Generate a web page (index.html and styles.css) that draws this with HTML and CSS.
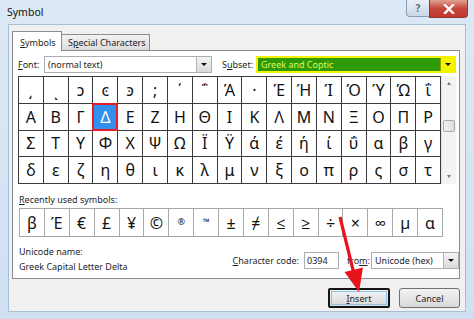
FILE: index.html
```html
<!DOCTYPE html>
<html>
<head>
<meta charset="UTF-8">
<title>Symbol</title>
<link rel="stylesheet" href="styles.css">
</head>
<body>
<div class="window">
    <div class="titlebar">
        <span class="title">Symbol</span>
        <div class="caption">
            <div class="cbtn help">?</div>
            <div class="cbtn close">
                <svg width="12" height="10" viewBox="0 0 12 10"><path d="M2 1 L10 9 M10 1 L2 9" stroke="#fff" stroke-width="2.4" stroke-linecap="square"/></svg>
            </div>
        </div>
    </div>
    <div class="client">
        <div class="tabs">
            <div class="tab active"><u>S</u>ymbols</div>
            <div class="tab">S<u>p</u>ecial Characters</div>
        </div>
        <div class="panel">
            <div class="fontrow">
                <span class="lbl font-lbl"><u>F</u>ont:</span>
                <div class="combo font"><span>(normal text)</span><i class="drop"></i></div>
                <span class="lbl subset-lbl">S<u>u</u>bset:</span>
                <div class="combo subset"><span>Greek and Coptic</span><i class="drop"></i></div>
            </div>
            <div class="charbox">
                <div class="chars">
                    <div>͵</div><div>ͺ</div><div>ͻ</div><div>ͼ</div><div>ͽ</div><div>;</div><div>΄</div><div>΅</div><div>Ά</div><div>·</div><div>Έ</div><div>Ή</div><div>Ί</div><div>Ό</div><div>Ύ</div><div>Ώ</div><div>ΐ</div>
                    <div>Α</div><div>Β</div><div>Γ</div><div class="sel">Δ</div><div>Ε</div><div>Ζ</div><div>Η</div><div>Θ</div><div>Ι</div><div>Κ</div><div>Λ</div><div>Μ</div><div>Ν</div><div>Ξ</div><div>Ο</div><div>Π</div><div>Ρ</div>
                    <div>Σ</div><div>Τ</div><div>Υ</div><div>Φ</div><div>Χ</div><div>Ψ</div><div>Ω</div><div>Ϊ</div><div>Ϋ</div><div>ά</div><div>έ</div><div>ή</div><div>ί</div><div>ΰ</div><div>α</div><div>β</div><div>γ</div>
                    <div>δ</div><div>ε</div><div>ζ</div><div>η</div><div>θ</div><div>ι</div><div>κ</div><div>λ</div><div>μ</div><div>ν</div><div>ξ</div><div>ο</div><div>π</div><div>ρ</div><div>ς</div><div>σ</div><div>τ</div>
                </div>
                <div class="scrollbar">
                    <i class="up"></i>
                    <div class="track"><div class="thumb"></div></div>
                    <i class="down"></i>
                </div>
            </div>
            <div class="lbl recent-lbl"><u>R</u>ecently used symbols:</div>
            <div class="recent">
                <div>β</div><div>Έ</div><div>€</div><div>£</div><div>¥</div><div>©</div><div class="small">®</div><div class="small">™</div><div>±</div><div>≠</div><div>≤</div><div>≥</div><div>÷</div><div>×</div><div>∞</div><div>µ</div><div>α</div>
            </div>
            <div class="inforow">
                <div class="uname">
                    <div>Unicode name:</div>
                    <div>Greek Capital Letter Delta</div>
                </div>
                <div class="codegroup">
                    <span class="lbl"><u>C</u>haracter code:</span>
                    <div class="field">0394</div>
                    <span class="lbl from-lbl">fro<u>m</u>:</span>
                    <div class="combo from"><span>Unicode (hex)</span><i class="drop"></i></div>
                </div>
            </div>
        </div>
        <div class="buttons">
            <div class="btn default"><span><u>I</u>nsert</span></div>
            <div class="btn">Cancel</div>
        </div>
    </div>
    <svg class="pointer" width="474" height="319" viewBox="0 0 474 319">
        <path d="M340 217 L354 274" stroke="#e8141c" stroke-width="3.2" fill="none"/>
        <path d="M359 292 L344.5 272 L363 267.5 Z" fill="#e8141c"/>
    </svg>
</div>
</body>
</html>
```

FILE: styles.css
```css
body {
    margin: 0;
    padding: 0;
    font-family: "Noto Sans", "Open Sans", sans-serif;
    font-size: 9px;
    color: #1e1e1e;
}

u {
    text-decoration: underline;
    text-underline-offset: 1px;
}

.window {
    position: relative;
    width: 474px;
    height: 319px;
    overflow: hidden;
    background: linear-gradient(#dce8f5, #cfe0f2);
}

.titlebar {
    display: flex;
    height: 24px;
}

.title {
    font-size: 10.5px;
    line-height: 25px;
    padding-left: 7px;
    color: #111;
}

.caption {
    display: flex;
    margin-left: auto;
    margin-right: 6px;
    align-self: flex-start;
}

.cbtn {
    display: flex;
    align-items: center;
    justify-content: center;
    box-sizing: border-box;
}

.help {
    width: 23px;
    height: 17px;
    border: 1px solid #8a9bb3;
    border-top: none;
    border-right: none;
    border-radius: 0 0 0 4px;
    background: linear-gradient(#e9eff7, #cbd8e8);
    color: #5a6a80;
    font-size: 10px;
    font-weight: bold;
}

.close {
    width: 39px;
    height: 18px;
    border: 1px solid #8c3a33;
    border-top: none;
    border-radius: 0 0 4px 0;
    background: linear-gradient(#e2a094, #c7483c 50%, #c1392d);
}

.client {
    box-sizing: border-box;
    margin: 0 8px;
    height: 288px;
    background: #f0f0f0;
    border: 1px solid #a9bdd6;
    padding: 6px 5px 0 3px;
}

.tabs {
    display: flex;
    height: 20px;
}

.tab {
    box-sizing: border-box;
    border: 1px solid #898c95;
    border-bottom: none;
    line-height: 15px;
    white-space: nowrap;
}

.tab.active {
    position: relative;
    z-index: 1;
    width: 50px;
    height: 20px;
    background: #fff;
    padding: 3px 0 0 7px;
}

.tab:not(.active) {
    width: 88px;
    height: 16px;
    margin-top: 3px;
    border-left: none;
    background: linear-gradient(#f2f2f2, #dcdcdc);
    padding: 0 0 0 6px;
}

.panel {
    box-sizing: border-box;
    margin-top: -1px;
    width: 448px;
    height: 229px;
    background: #fff;
    border: 1px solid #898c95;
    padding: 5px 0 0 5px;
}

.lbl {
    white-space: nowrap;
}

.fontrow {
    display: flex;
    align-items: center;
    height: 17px;
}

.font-lbl {
    width: 26px;
}

.subset-lbl {
    width: 34px;
    margin-left: 10px;
}

.combo {
    box-sizing: border-box;
    display: flex;
    align-items: center;
    height: 17px;
    border: 1px solid #abadb3;
    background: #fff;
    padding-left: 3px;
    white-space: nowrap;
}

.combo span {
    flex: 1;
}

.combo.font {
    width: 168px;
}

.combo.subset {
    width: 200px;
    border: 2px solid #f2f200;
    padding-left: 3px;
    background: #2f9a08;
    color: #dcf560;
}

.drop {
    display: flex;
    align-items: center;
    justify-content: center;
    box-sizing: border-box;
    width: 15px;
    height: 15px;
    border-left: 1px solid #b4b4b4;
    background: linear-gradient(#f4f4f4, #dadada);
}

.drop::after {
    content: "";
    border-left: 3px solid transparent;
    border-right: 3px solid transparent;
    border-top: 3px solid #111;
}

.subset .drop {
    height: 13px;
    width: 14px;
    border-left: 1px solid #9aa000;
    background: #f5f500;
}

.charbox {
    display: flex;
    margin-top: 3px;
    width: 438px;
    height: 108px;
}

.chars {
    box-sizing: border-box;
    width: 424px;
    height: 108px;
    display: grid;
    grid-template-columns: repeat(17, 1fr);
    grid-template-rows: repeat(4, 1fr);
    gap: 1px;
    padding: 1px;
    background: #3c3c3c;
}

.chars div,
.recent div {
    display: flex;
    align-items: center;
    justify-content: center;
    background: #fff;
    color: #111;
    font-size: 16px;
}

.chars .sel {
    background: #3390ec;
    color: #fff;
    outline: 2px solid #e3202a;
    outline-offset: -1px;
    position: relative;
}

.scrollbar {
    display: flex;
    flex-direction: column;
    align-items: center;
    width: 14px;
    background: #f3f3f3;
    border-left: 1px solid #e2e2e2;
}

.scrollbar i {
    display: block;
    width: 0;
    height: 0;
    margin: 6px 0;
    border-left: 2px solid transparent;
    border-right: 2px solid transparent;
}

.scrollbar .up {
    border-bottom: 3px solid #777;
}

.scrollbar .down {
    border-top: 3px solid #777;
}

.track {
    flex: 1;
    width: 100%;
    padding-top: 29px;
}

.thumb {
    box-sizing: border-box;
    width: 12px;
    height: 12px;
    margin-left: 1px;
    border: 1px solid #a6a6a6;
    border-radius: 2px;
    background: linear-gradient(to right, #f4f4f4, #dedede);
}

.recent-lbl {
    margin-top: 10px;
    margin-left: 1px;
    line-height: 12px;
}

.recent {
    box-sizing: border-box;
    margin-top: 2px;
    margin-left: 1px;
    width: 424px;
    height: 29px;
    display: grid;
    grid-template-columns: repeat(17, 1fr);
    gap: 1px;
    padding: 1px;
    background: #a8a8a8;
}

.recent .small {
    font-size: 9px;
    align-items: flex-start;
    padding-top: 6px;
}

.inforow {
    display: flex;
    margin-top: 7px;
    margin-left: 1px;
}

.uname {
    width: 215px;
    line-height: 15px;
}

.codegroup {
    display: flex;
    align-items: center;
    margin-top: 8px;
    height: 17px;
}

.field {
    box-sizing: border-box;
    width: 35px;
    height: 17px;
    margin-left: 5px;
    border: 1px solid #abadb3;
    padding-left: 2px;
    line-height: 15px;
}

.from-lbl {
    margin-left: 8px;
    width: 24px;
}

.combo.from {
    width: 88px;
}

.buttons {
    display: flex;
    justify-content: flex-end;
    gap: 9px;
    margin-top: 9px;
}

.btn {
    box-sizing: border-box;
    display: flex;
    align-items: center;
    justify-content: center;
    width: 61px;
    height: 20px;
    border: 1px solid #707070;
    border-radius: 3px;
    background: linear-gradient(#f3f3f3, #e6e6e6 50%, #d8d8d8);
}

.btn.default {
    width: 62px;
    border: 2px solid #151515;
    border-radius: 2px;
    padding: 1px;
}

.btn.default span {
    display: flex;
    align-items: center;
    justify-content: center;
    width: 100%;
    height: 100%;
    box-sizing: border-box;
    border: 1px solid #8dc4e8;
}

.pointer {
    position: absolute;
    left: 0;
    top: 0;
    pointer-events: none;
}
```
